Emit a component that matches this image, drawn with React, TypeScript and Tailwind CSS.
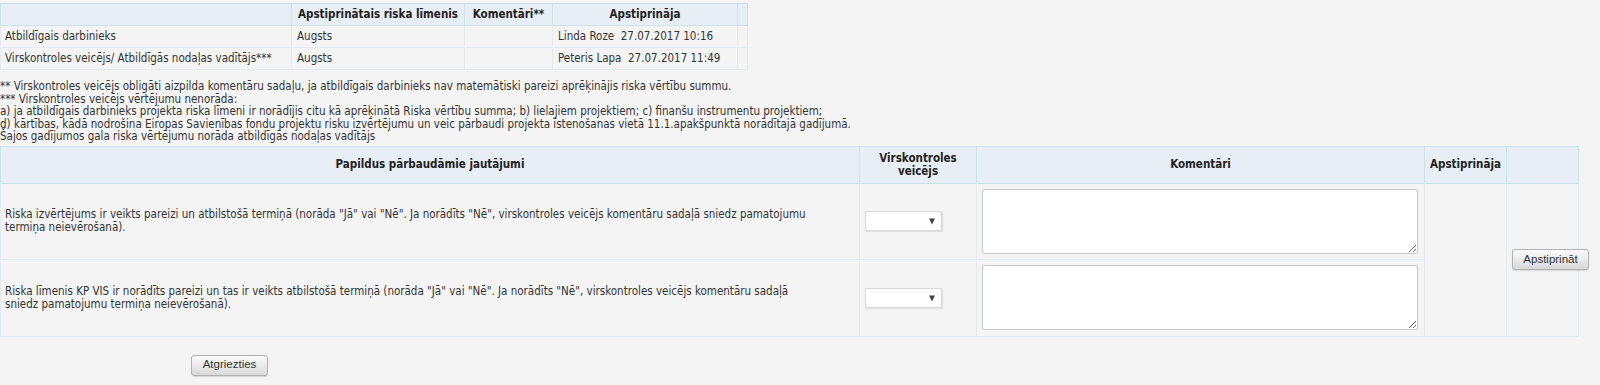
import React from "react";

const th = "border border-[#cde2e8] bg-[#e8eef5] font-bold text-[#222] text-center px-[4px] align-middle";
const td = "border border-[#e3ebef] px-[5px] align-middle";

const SelectBox = () => (
    <div className="relative w-[77px] h-[20px]">
        <select className="w-full h-full appearance-none bg-white border border-[#d9d9d9] shadow-[1px_1px_1px_rgba(0,0,0,0.08)] outline-none" defaultValue="">
            <option value=""></option>
            <option value="ja">Jā</option>
            <option value="ne">Nē</option>
        </select>
        <svg className="absolute right-[7px] top-[7px] pointer-events-none" width="6" height="7" viewBox="0 0 6 7">
            <path d="M0 0.5 H6 L3 6.5 Z" fill="#444" />
        </svg>
    </div>
);

const Button = ({ label }: { label: string }) => (
    <button className="h-[21px] w-[77px] rounded-[3px] border border-[#b2b2b2] bg-gradient-to-b from-[#fbfbfb] to-[#d9d9d9] shadow-[0_1px_1px_rgba(0,0,0,0.12)] font-['Liberation_Sans',Arial,sans-serif] text-[11.5px] text-[#333]">
        {label}
    </button>
);

const App = () => {
    return (
        <div className="min-h-[385px] bg-[#f4f4f4] pt-[3px] font-['DejaVu_Sans_Condensed','DejaVu_Sans',sans-serif] text-[11.5px] text-[#333]">
            <table className="w-[747px] table-fixed border-collapse">
                <colgroup>
                    <col className="w-[291px]" />
                    <col className="w-[173px]" />
                    <col className="w-[88px]" />
                    <col className="w-[185px]" />
                    <col className="w-[10px]" />
                </colgroup>
                <thead>
                    <tr className="h-[22px]">
                        <th className={th}></th>
                        <th className={th + " whitespace-nowrap"}>Apstiprinātais riska līmenis</th>
                        <th className={th + " whitespace-nowrap"}>Komentāri**</th>
                        <th className={th}>Apstiprināja</th>
                        <th className={th}></th>
                    </tr>
                </thead>
                <tbody>
                    <tr className="h-[22px]">
                        <td className={td + " pl-[4px] whitespace-nowrap"}>Atbildīgais darbinieks</td>
                        <td className={td}>Augsts</td>
                        <td className={td}></td>
                        <td className={td + " whitespace-nowrap"}>Linda Roze&nbsp; 27.07.2017 10:16</td>
                        <td className={td}></td>
                    </tr>
                    <tr className="h-[22px]">
                        <td className={td + " pl-[4px] whitespace-nowrap"}>Virskontroles veicējs/ Atbildīgās nodaļas vadītājs***</td>
                        <td className={td}>Augsts</td>
                        <td className={td}></td>
                        <td className={td + " whitespace-nowrap"}>Peteris Lapa&nbsp; 27.07.2017 11:49</td>
                        <td className={td}></td>
                    </tr>
                </tbody>
            </table>

            <div className="mt-[10px] leading-[12.5px] whitespace-nowrap">
                <div>** Virskontroles veicējs obligāti aizpilda komentāru sadaļu, ja atbildīgais darbinieks nav matemātiski pareizi aprēķinājis riska vērtību summu.</div>
                <div>*** Virskontroles veicējs vērtējumu nenorāda:</div>
                <div>a) ja atbildīgais darbinieks projekta riska līmeni ir norādījis citu kā aprēķinātā Riska vērtību summa; b) lielajiem projektiem; c) finanšu instrumentu projektiem;</div>
                <div>d) kārtības, kādā nodrošina Eiropas Savienības fondu projektu risku izvērtējumu un veic pārbaudi projekta īstenošanas vietā 11.1.apakšpunktā norādītajā gadījumā.</div>
                <div>Šajos gadījumos gala riska vērtējumu norāda atbildīgās nodaļas vadītājs</div>
            </div>

            <table className="mt-[3px] w-[1578px] table-fixed border-collapse">
                <colgroup>
                    <col className="w-[859px]" />
                    <col className="w-[117px]" />
                    <col className="w-[448px]" />
                    <col className="w-[82px]" />
                    <col className="w-[72px]" />
                </colgroup>
                <thead>
                    <tr className="h-[37px]">
                        <th className={th}>Papildus pārbaudāmie jautājumi</th>
                        <th className={th + " leading-[13px]"}>Virskontroles<br />veicējs</th>
                        <th className={th}>Komentāri</th>
                        <th className={th}>Apstiprināja</th>
                        <th className={th}></th>
                    </tr>
                </thead>
                <tbody>
                    <tr className="h-[76px]">
                        <td className={td + " pl-[4px] leading-[13px]"}>
                            Riska izvērtējums ir veikts pareizi un atbilstošā termiņā (norāda "Jā" vai "Nē". Ja norādīts "Nē", virskontroles veicējs komentāru sadaļā sniedz pamatojumu
                            <br />
                            termiņa neievērošanā).
                        </td>
                        <td className={td}>
                            <SelectBox />
                        </td>
                        <td className={td + " pr-[7px]"}>
                            <textarea className="block w-[436px] h-[65px] bg-white border border-[#c9c9c9] rounded-[2px] outline-none" />
                        </td>
                        <td className={td} rowSpan={2}></td>
                        <td className={td + " overflow-visible"} rowSpan={2}>
                            <Button label="Apstiprināt" />
                        </td>
                    </tr>
                    <tr className="h-[77px]">
                        <td className={td + " pl-[4px] leading-[13px]"}>
                            Riska līmenis KP VIS ir norādīts pareizi un tas ir veikts atbilstošā termiņā (norāda "Jā" vai "Nē". Ja norādīts "Nē", virskontroles veicējs komentāru sadaļā
                            <br />
                            sniedz pamatojumu termiņa neievērošanā).
                        </td>
                        <td className={td}>
                            <SelectBox />
                        </td>
                        <td className={td + " pr-[7px]"}>
                            <textarea className="block w-[436px] h-[65px] bg-white border border-[#c9c9c9] rounded-[2px] outline-none" />
                        </td>
                    </tr>
                </tbody>
            </table>

            <div className="pl-[191px] pt-[18px] pb-[11px]">
                <Button label="Atgriezties" />
            </div>
        </div>
    );
};

export default App;
